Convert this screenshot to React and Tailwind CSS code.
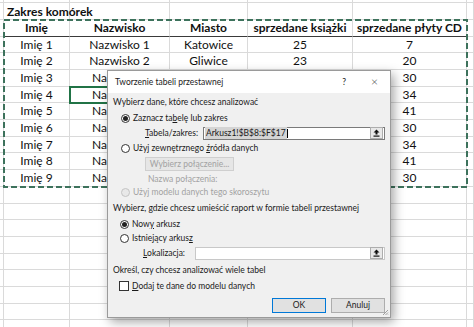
const COLS = [4, 66, 100, 78, 105, 114, 7];

const DATA = [
  ["Imię 1", "Nazwisko 1", "Katowice", "25", "7"],
  ["Imię 2", "Nazwisko 2", "Gliwice", "23", "20"],
  ["Imię 3", "Na", "", "", "30"],
  ["Imię 4", "Na", "", "", "34"],
  ["Imię 5", "Na", "", "", "41"],
  ["Imię 6", "Na", "", "", "30"],
  ["Imię 7", "Na", "", "", "34"],
  ["Imię 8", "Na", "", "", "41"],
  ["Imię 9", "Na", "", "", "30"],
];

const HEADERS = ["Imię", "Nazwisko", "Miasto", "sprzedane książki", "sprzedane płyty CD"];

function Row({ cells = [], bold, header, covered, height = "h-[16.7px]" }) {
  return (
    <div className={`flex ${height}`}>
      {COLS.map((w, i) => {
        const inTable = i > 0 && i < 6;
        const text = inTable ? cells[i - 1] : null;
        const clip = covered && i === 2;
        return (
          <div
            key={i}
            style={{ width: w }}
            className={`shrink-0 flex items-center border-r border-b whitespace-nowrap ${
              clip ? "justify-start pl-[22px]" : "justify-center"
            } ${header && inTable ? "border-b-[#3a3a3a]" : "border-b-[#dadada]"} border-r-[#dadada] ${
              bold ? "font-bold" : ""
            }`}
          >
            {text}
          </div>
        );
      })}
    </div>
  );
}

function Radio({ checked, disabled }) {
  return (
    <span
      className={`w-[9px] h-[9px] rounded-full border flex items-center justify-center shrink-0 ${
        disabled ? "border-[#c4c4c4] bg-[#e8e8e8]" : "border-[#333] bg-white"
      }`}
    >
      {checked && <span className="w-[5px] h-[5px] rounded-full bg-[#222]" />}
    </span>
  );
}

function CollapseBtn() {
  return (
    <div className="w-[13px] h-[12px] border border-[#adadad] bg-[#e8e8e8] flex items-center justify-center">
      <svg width="7" height="8" viewBox="0 0 7 8">
        <path d="M3.5 0.5 L6.5 3.5 L4.5 3.5 L4.5 5.5 L2.5 5.5 L2.5 3.5 L0.5 3.5 Z" fill="#111" />
        <rect x="0.5" y="6.5" width="6" height="1.2" fill="#111" />
      </svg>
    </div>
  );
}

function Dialog() {
  return (
    <div className="absolute left-[107px] top-[70px] w-[284px] h-[248px] bg-[#f0f0f0] border border-[#9a9a9a] shadow-[3px_4px_10px_rgba(0,0,0,0.35)] text-[8.5px] text-[#1a1a1a] flex flex-col">
      {/* title bar */}
      <div className="h-[22px] bg-white flex items-center pl-[7px] shrink-0">
        <span className="flex-1">Tworzenie tabeli przestawnej</span>
        <span className="w-[10px] text-center mr-[22px]">?</span>
        <span className="text-[12px] font-light mr-[12px] leading-none">×</span>
      </div>

      <div className="flex flex-col pl-[5px] pr-[5px]">
        <div className="h-[18px] flex items-center">Wybierz dane, które chcesz analizować</div>
        <div className="h-[14px] flex items-center gap-[3px] pl-[8px]">
          <Radio checked />
          <span>
            Zaznacz ta<u>b</u>elę lub zakres
          </span>
        </div>
        <div className="h-[16px] flex items-center pl-[32px]">
          <span className="w-[58px]">
            <u>T</u>abela/zakres:
          </span>
          <div className="flex-1 h-[13px] bg-white border border-[#7a7a7a] flex items-center justify-between pl-[1px] pr-[1px]">
            <span className="flex items-center">
              <span className="bg-[#d4d4d4] px-[1px]">Arkusz1!$B$8:$F$17</span>
              <span className="w-px h-[9px] bg-black" />
            </span>
            <CollapseBtn />
          </div>
        </div>
        <div className="h-[14px] flex items-center gap-[3px] pl-[8px]">
          <Radio />
          <span>
            Użyj zewnętrznego <u>ź</u>ródła danych
          </span>
        </div>
        <div className="h-[18px] flex items-center pl-[32px]">
          <div className="w-[89px] h-[14px] border border-[#cfcfcf] bg-[#e6e6e6] text-[#a2a2a2] flex items-center justify-center">
            Wybierz połączenie...
          </div>
        </div>
        <div className="h-[12px] flex items-center pl-[35px] text-[#a2a2a2]">Nazwa połączenia:</div>
        <div className="h-[14px] flex items-center gap-[3px] pl-[8px] text-[#a2a2a2]">
          <Radio disabled />
          <span>Użyj modelu danych tego skoroszytu</span>
        </div>

        <div className="h-[18px] flex items-center">Wybierz, gdzie chcesz umieścić raport w formie tabeli przestawnej</div>
        <div className="h-[14px] flex items-center gap-[3px] pl-[7px]">
          <Radio checked />
          <span>
            Now<u>y</u> arkusz
          </span>
        </div>
        <div className="h-[14px] flex items-center gap-[3px] pl-[7px]">
          <Radio />
          <span>
            Istniejący arkus<u>z</u>
          </span>
        </div>
        <div className="h-[16px] flex items-center pl-[30px]">
          <span className="w-[52px]">
            <u>L</u>okalizacja:
          </span>
          <div className="flex-1 h-[13px] bg-white border border-[#c8c8c8] flex items-center justify-end pr-[1px]">
            <CollapseBtn />
          </div>
        </div>

        <div className="h-[18px] flex items-center">Określ, czy chcesz analizować wiele tabel</div>
        <div className="h-[14px] flex items-center gap-[3px] pl-[6px]">
          <span className="w-[10px] h-[10px] border border-[#333] bg-white shrink-0" />
          <span>
            <u>D</u>odaj te dane do modelu danych
          </span>
        </div>
        <div className="flex justify-end gap-[5px] pt-[5px]">
          <div className="w-[54px] h-[15px] border border-[#0078d7] bg-[#e1e1e1] flex items-center justify-center">OK</div>
          <div className="w-[54px] h-[15px] border border-[#adadad] bg-[#e1e1e1] flex items-center justify-center">Anuluj</div>
        </div>
      </div>

      <svg className="absolute right-[1px] bottom-[1px]" width="7" height="7" viewBox="0 0 7 7">
        <path d="M6 1 L1 6 M6 3.5 L3.5 6 M6 5.5 L5.5 6" stroke="#8a8a8a" strokeWidth="0.8" />
      </svg>
    </div>
  );
}

export default function App() {
  const empty = Array.from({ length: 9 });
  return (
    <div className="relative w-[474px] h-[327px] overflow-hidden bg-white text-[12px] text-[#111] font-['Lato',sans-serif]">
      {/* sheet */}
      <div className="flex flex-col">
        <Row height="h-[3.3px]" />
        <div className="relative">
          <Row />
          <span className="absolute left-[7px] top-0 h-[16.7px] flex items-center font-bold">Zakres komórek</span>
        </div>
        <Row cells={HEADERS} bold header />
        {DATA.map((r, i) => (
          <Row key={i} cells={r} covered={i >= 2} />
        ))}
        {empty.map((_, i) => (
          <Row key={"e" + i} />
        ))}
      </div>

      {/* copy marquee */}
      <svg className="absolute left-0 top-0 pointer-events-none" width="474" height="327">
        <rect x="4" y="20" width="463" height="167" fill="none" stroke="#3d725c" strokeWidth="2" strokeDasharray="6 3" />
      </svg>

      {/* active cell */}
      <div className="absolute left-[69px] top-[86px] w-[102px] h-[18px] border-2 border-[#217346]" />

      <Dialog />
    </div>
  );
}
